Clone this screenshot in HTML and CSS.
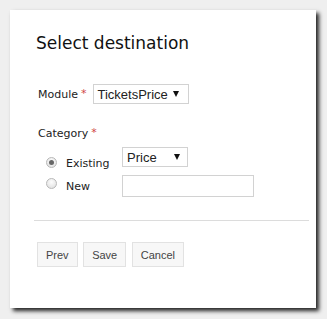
FILE: index.html
```html
<!DOCTYPE html>
<html>
<head>
<meta charset="utf-8">
<link rel="stylesheet" href="styles.css">
</head>
<body>
<div class="card">
  <h1 class="title">Select destination</h1>
  <div class="module-row">
    <span class="label">Module</span><span class="req">*</span>
    <div class="select module-select"><span class="sel-text">TicketsPrice</span><span class="arrow"></span></div>
  </div>
  <div class="category-label"><span class="label">Category</span><span class="req">*</span></div>
  <div class="options">
    <span class="radio checked r1"></span>
    <span class="opt-label l1">Existing</span>
    <div class="select price-select"><span class="sel-text">Price</span><span class="arrow"></span></div>
    <span class="radio r2"></span>
    <span class="opt-label l2">New</span>
    <div class="text-input"></div>
  </div>
  <div class="divider"></div>
  <div class="buttons">
    <button class="btn">Prev</button>
    <button class="btn">Save</button>
    <button class="btn">Cancel</button>
  </div>
</div>
</body>
</html>
```
FILE: styles.css
```css
html, body {
  margin: 0;
  padding: 0;
}
body {
  background: #efefef;
  padding: 10px;
  width: 327px;
  height: 319px;
  box-sizing: border-box;
  overflow: hidden;
}
.card {
  width: 306px;
  height: 298px;
  box-sizing: border-box;
  background: #fff;
  padding: 23px 7px 0 24px;
  box-shadow: 3px 3px 4px rgba(0, 0, 0, 0.85);
  font-family: "DejaVu Sans", Verdana, sans-serif;
}
.title {
  margin: 0 0 0 2px;
  font-size: 17px;
  line-height: 20px;
  font-weight: normal;
  color: #111;
}
.module-row {
  display: flex;
  align-items: center;
  margin: 31px 0 0 4px;
  height: 20px;
}
.label {
  font-size: 11px;
  line-height: 13px;
  color: #222;
}
.req {
  color: #d04545;
  font-size: 11px;
  line-height: 13px;
  margin-left: 3px;
  position: relative;
  top: -1px;
}
.select {
  box-sizing: border-box;
  height: 20px;
  border: 1px solid #d2d2d2;
  display: flex;
  align-items: center;
  justify-content: space-between;
  padding: 0 9px 0 4px;
  font-family: "Liberation Sans", Arial, sans-serif;
  font-size: 13px;
  color: #222;
  background: #fff;
}
.module-select {
  width: 96px;
  margin-left: 6px;
}
.price-select {
  width: 66px;
  padding-right: 7px;
}
.arrow {
  width: 0;
  height: 0;
  border-left: 3px solid transparent;
  border-right: 3px solid transparent;
  border-top: 6px solid #111;
}
.category-label {
  margin: 23px 0 0 4px;
  display: flex;
  align-items: flex-start;
}
.options {
  display: grid;
  grid-template-columns: 20px 56px auto;
  grid-template-rows: 20px 22px;
  row-gap: 8px;
  margin: 7px 0 0 12px;
}
.radio {
  width: 11px;
  height: 11px;
  box-sizing: border-box;
  border-radius: 50%;
  border: 1px solid #b8b8b8;
  background: radial-gradient(circle at 50% 35%, #fdfdfd 0%, #e6e6e6 70%, #d8d8d8 100%);
  position: relative;
}
.radio.checked::after {
  content: "";
  position: absolute;
  left: 2px;
  top: 2px;
  width: 5px;
  height: 5px;
  border-radius: 50%;
  background: #666;
}
.r1 { margin-top: 10px; }
.r2 { margin-top: 3px; }
.opt-label {
  font-size: 11px;
  line-height: 13px;
  color: #222;
}
.l1 { margin-top: 10px; }
.l2 { margin-top: 5px; }
.text-input {
  width: 132px;
  height: 22px;
  box-sizing: border-box;
  border: 1px solid #d2d2d2;
  background: #fff;
}
.divider {
  height: 1px;
  background: #dcdcdc;
  margin-top: 23px;
}
.buttons {
  display: flex;
  gap: 6px;
  margin: 21px 0 0 3px;
}
.btn {
  height: 25px;
  box-sizing: border-box;
  padding: 0 8px;
  border: 1px solid #e2e2e2;
  background: #f7f7f7;
  font-family: "Liberation Sans", Arial, sans-serif;
  font-size: 11px;
  color: #444;
  border-radius: 0;
}
.btn + .btn {
  margin-left: -0.5px;
}
```
